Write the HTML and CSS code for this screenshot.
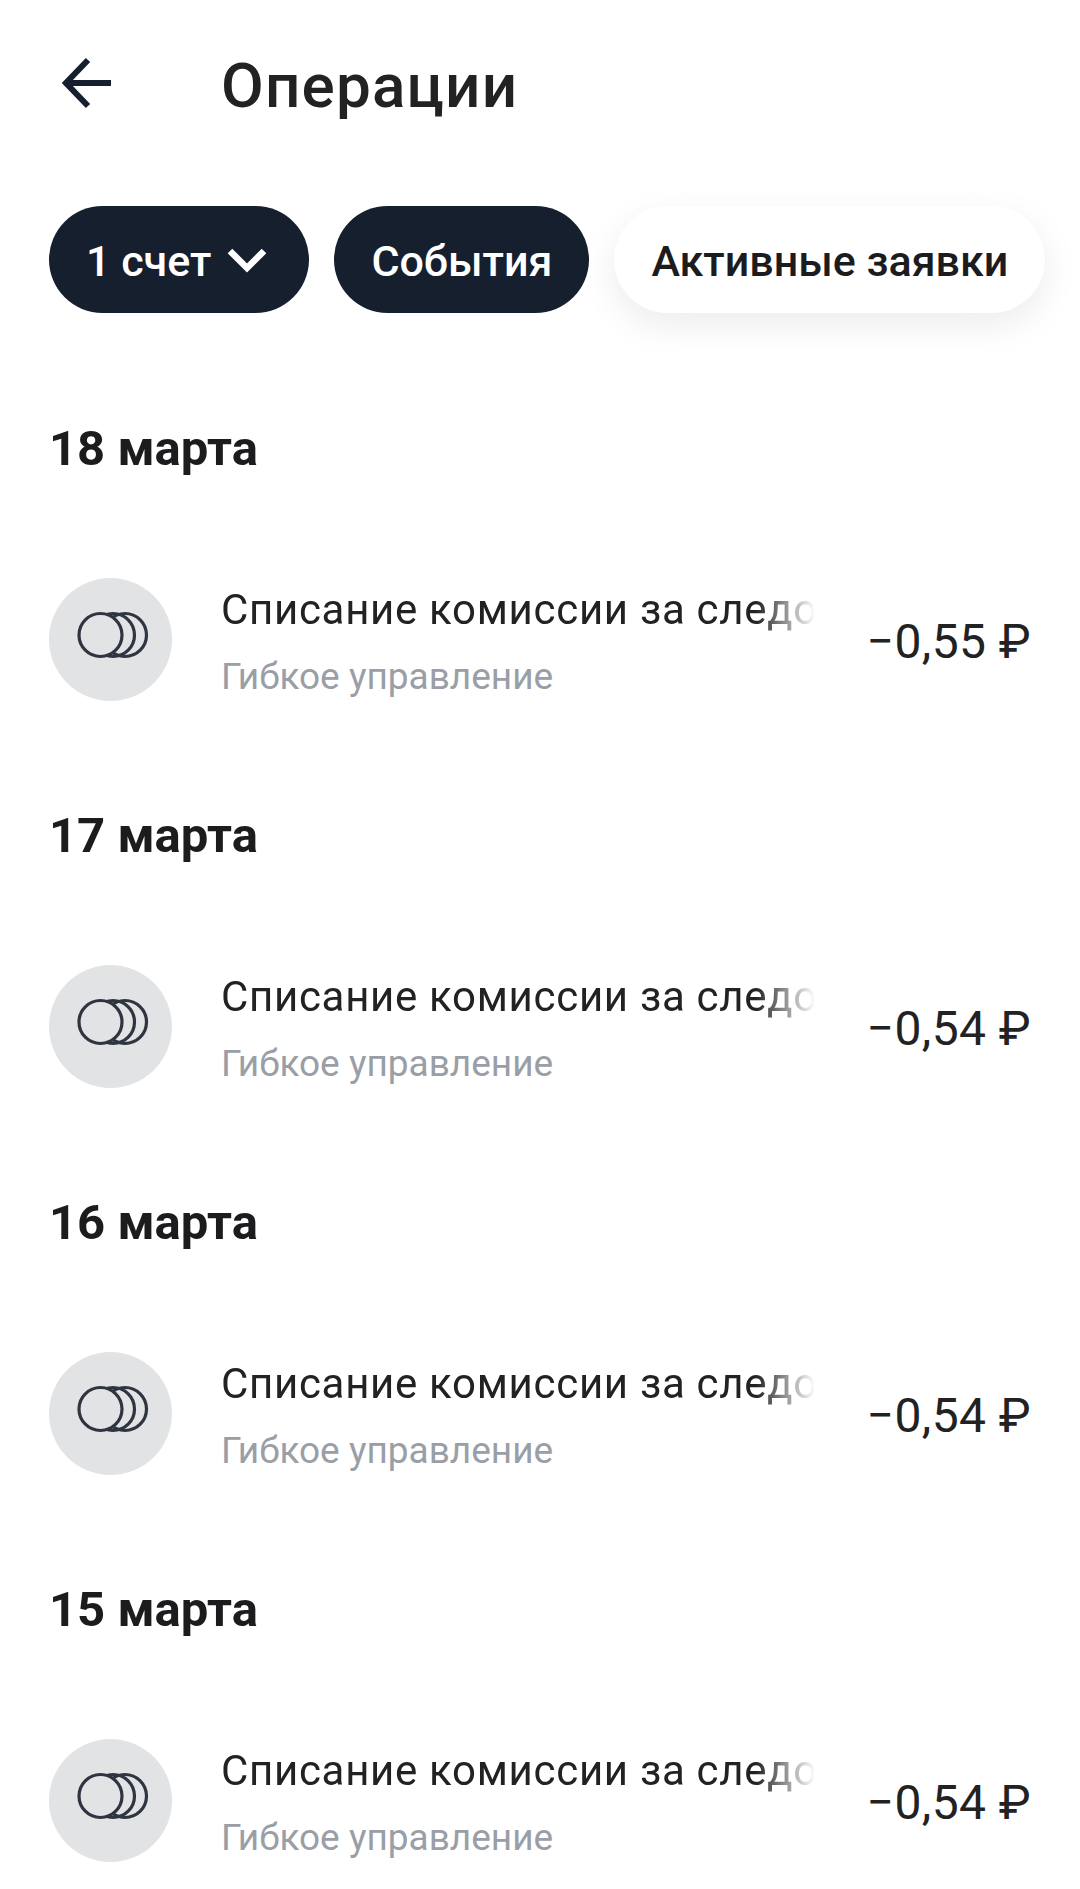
FILE: index.html
```html
<!DOCTYPE html>
<html lang="ru">
<head>
    <meta charset="UTF-8">
    <meta name="viewport" content="width=device-width, initial-scale=1.0">
    <title>Операции</title>
    <link rel="stylesheet" href="styles.css">
</head>
<body>
    <!-- Шапка -->
    <header class="top-bar">
        <svg class="back-icon" viewBox="0 0 50 52" fill="none" stroke="#161f2e" stroke-width="6">
            <path d="M49 26H4"/>
            <path d="M26 3 4 26l22 23"/>
        </svg>
        <h1 class="page-title">Операции</h1>
    </header>

    <!-- Фильтры -->
    <div class="filters">
        <div class="pill pill-dark">1 счет
            <svg class="chevron" viewBox="0 0 40 26" fill="none" stroke="#fff" stroke-width="6.5">
                <path d="M3 4l17 17L37 4"/>
            </svg>
        </div>
        <div class="pill pill-dark">События</div>
        <div class="pill pill-light">Активные заявки</div>
    </div>

    <!-- Список операций -->
    <section class="day">
        <h2 class="day-title">18 марта</h2>
        <div class="operation">
            <div class="op-icon">
                <svg viewBox="0 0 123 123" fill="none" stroke="#2f3540" stroke-width="3.2">
                    <circle cx="76" cy="57" r="21.5"/>
                    <circle cx="64" cy="57" r="21.5"/>
                    <circle cx="51.5" cy="57" r="21.5" fill="#e1e3e5"/>
                </svg>
            </div>
            <div class="op-text">
                <div class="op-name">Списание комиссии за следо</div>
                <div class="op-sub">Гибкое управление</div>
            </div>
            <div class="op-sum">−0,55 ₽</div>
        </div>
    </section>

    <section class="day">
        <h2 class="day-title">17 марта</h2>
        <div class="operation">
            <div class="op-icon">
                <svg viewBox="0 0 123 123" fill="none" stroke="#2f3540" stroke-width="3.2">
                    <circle cx="76" cy="57" r="21.5"/>
                    <circle cx="64" cy="57" r="21.5"/>
                    <circle cx="51.5" cy="57" r="21.5" fill="#e1e3e5"/>
                </svg>
            </div>
            <div class="op-text">
                <div class="op-name">Списание комиссии за следо</div>
                <div class="op-sub">Гибкое управление</div>
            </div>
            <div class="op-sum">−0,54 ₽</div>
        </div>
    </section>

    <section class="day">
        <h2 class="day-title">16 марта</h2>
        <div class="operation">
            <div class="op-icon">
                <svg viewBox="0 0 123 123" fill="none" stroke="#2f3540" stroke-width="3.2">
                    <circle cx="76" cy="57" r="21.5"/>
                    <circle cx="64" cy="57" r="21.5"/>
                    <circle cx="51.5" cy="57" r="21.5" fill="#e1e3e5"/>
                </svg>
            </div>
            <div class="op-text">
                <div class="op-name">Списание комиссии за следо</div>
                <div class="op-sub">Гибкое управление</div>
            </div>
            <div class="op-sum">−0,54 ₽</div>
        </div>
    </section>

    <section class="day">
        <h2 class="day-title">15 марта</h2>
        <div class="operation">
            <div class="op-icon">
                <svg viewBox="0 0 123 123" fill="none" stroke="#2f3540" stroke-width="3.2">
                    <circle cx="76" cy="57" r="21.5"/>
                    <circle cx="64" cy="57" r="21.5"/>
                    <circle cx="51.5" cy="57" r="21.5" fill="#e1e3e5"/>
                </svg>
            </div>
            <div class="op-text">
                <div class="op-name">Списание комиссии за следо</div>
                <div class="op-sub">Гибкое управление</div>
            </div>
            <div class="op-sum">−0,54 ₽</div>
        </div>
    </section>
</body>
</html>
```

FILE: styles.css
```css
html, body {
    height: 100%;
}

body {
    font-family: Roboto, "Noto Sans", sans-serif;
    background-color: #fff;
    color: #1c1c1e;
    margin: 0;
    overflow: hidden;
}

/* Шапка */
.top-bar {
    display: flex;
    align-items: center;
    height: 170px;
    padding-left: 62px;
}

.back-icon {
    width: 50px;
    height: 52px;
    margin-right: 109px;
    margin-bottom: 5px;
}

.page-title {
    margin: 0;
    font-size: 62px;
    font-weight: 500;
    letter-spacing: 1.2px;
    color: #222;
}

/* Фильтры */
.filters {
    display: flex;
    gap: 25px;
    margin-top: 36px;
    padding-left: 49px;
}

.pill {
    display: flex;
    align-items: center;
    box-sizing: border-box;
    height: 107px;
    padding: 2px 37px 0;
    border-radius: 54px;
    font-size: 43px;
    font-weight: 500;
}

.pill-dark {
    background-color: #151f2e;
    color: #fff;
}

.pill-light {
    background-color: #fff;
    color: #1c1c1e;
    box-shadow: 0 12px 36px rgba(0, 0, 0, 0.08);
}

.chevron {
    width: 40px;
    height: 26px;
    margin-left: 16px;
    margin-right: 5px;
    margin-bottom: 2px;
}

/* Операции */
.day {
    height: 387px;
}

.day:first-of-type {
    margin-top: 110px;
}

.day-title {
    margin: 0;
    padding-left: 49px;
    font-size: 49px;
    line-height: 52px;
    font-weight: 700;
    color: #1c1c1e;
}

.operation {
    display: flex;
    align-items: center;
    margin-top: 103px;
    padding: 0 49px;
}

.op-icon {
    flex-shrink: 0;
    width: 123px;
    height: 123px;
    border-radius: 50%;
    background-color: #e1e3e5;
}

.op-icon svg {
    display: block;
    width: 123px;
    height: 123px;
}

.op-text {
    width: 594px;
    margin-left: 49px;
    padding-top: 4px;
}

.op-name {
    font-size: 42px;
    line-height: 50px;
    letter-spacing: 0.7px;
    white-space: nowrap;
    color: #222;
    -webkit-mask-image: linear-gradient(to right, #000 90%, transparent 100%);
    mask-image: linear-gradient(to right, #000 90%, transparent 100%);
}

.op-sub {
    margin-top: 20px;
    font-size: 37px;
    line-height: 44px;
    color: #9a9ea6;
}

.op-sum {
    margin-left: auto;
    padding-top: 4px;
    font-size: 48px;
    letter-spacing: 0.4px;
    color: #222;
    white-space: nowrap;
}
```
